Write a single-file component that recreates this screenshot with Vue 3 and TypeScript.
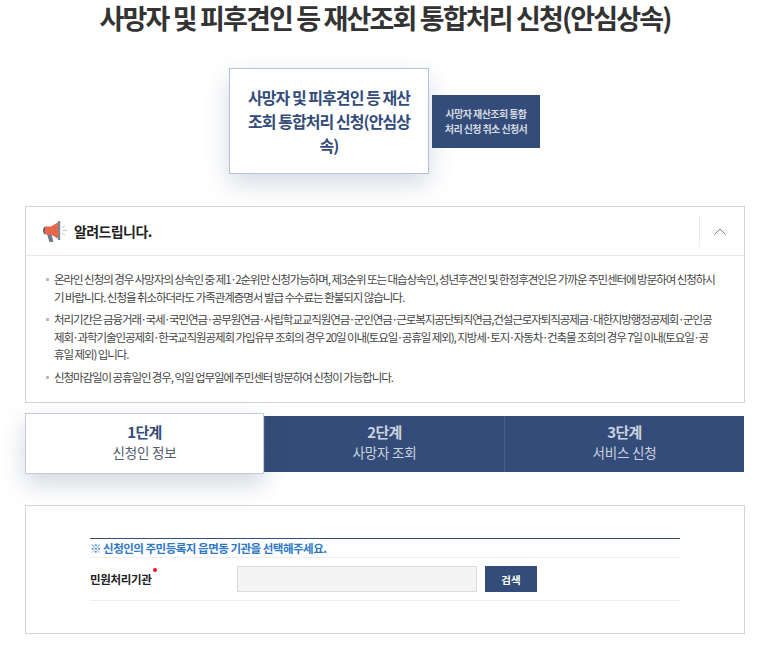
<script setup lang="ts">
const D = '\u200a·\u200a'
const notices: string[] = [
  `온라인 신청의 경우 사망자의 상속인 중 제1${D}2순위만 신청가능하며, 제3순위 또는 대습상속인, 성년후견인 및 한정후견인은 가까운 주민센터에 방문하여 신청하시기 바랍니다. 신청을 취소하더라도 가족관계증명서 발급 수수료는 환불되지 않습니다.`,
  `처리기간은 금융거래${D}국세${D}국민연금${D}공무원연금${D}사립학교교직원연금${D}군인연금${D}근로복지공단퇴직연금,건설근로자퇴직공제금${D}대한지방행정공제회${D}군인공제회${D}과학기술인공제회${D}한국교직원공제회 가입유무 조회의 경우 20일 이내(토요일${D}공휴일 제외), 지방세${D}토지${D}자동차${D}건축물 조회의 경우 7일 이내(토요일${D}공휴일 제외) 입니다.`,
  '신청마감일이 공휴일인 경우, 익일 업무일에 주민센터 방문하여 신청이 가능합니다.',
]
const steps = [
  { no: '1단계', name: '신청인 정보', active: true },
  { no: '2단계', name: '사망자 조회', active: false },
  { no: '3단계', name: '서비스 신청', active: false },
]
</script>

<template>
  <div class="page">
    <h1 class="title">사망자 및 피후견인 등 재산조회 통합처리 신청(안심상속)</h1>

    <div class="choices">
      <div class="choice-main">사망자 및 피후견인 등 재산조회 통합처리 신청(안심상속)</div>
      <div class="choice-sub">사망자 재산조회 통합<br />처리 신청 취소 신청서</div>
    </div>

    <section class="notice">
      <header class="notice-head">
        <svg class="horn" width="26" height="24" viewBox="0 0 26 24">
          <path d="M3 7.500v8C1.800 15 1 13.500 1 11.500S1.800 8 3 7.500z" fill="#5d6b78" />
          <path d="M5 15h4.500l1.600 6.800c.2.800-.3 1.200-1 1.200H8.300c-.6 0-1-.3-1.200-.9z" fill="#6d7b88" />
          <path d="M3 7.500h6L16.500 3v17L9 15.500H3z" fill="#e8664a" />
          <path d="M16 2h2.200v19H16z" fill="#7a8894" />
          <path d="M20 8.700l3-1.700M20.500 11.500H25M20 14.300l3 1.700" stroke="#c3c9cf" stroke-width="1" fill="none" />
        </svg>
        <strong class="notice-title">알려드립니다.</strong>
        <button class="toggle" type="button" aria-label="접기">
          <svg width="12" height="7" viewBox="0 0 12 7"><path d="M.5 6.500 6 1l5.500 5.500" fill="none" stroke="#6f7780" stroke-width="1" /></svg>
        </button>
      </header>
      <ul class="notice-list">
        <li v-for="n in notices" :key="n">{{ n }}</li>
      </ul>
    </section>

    <div class="steps">
      <div v-for="s in steps" :key="s.no" class="step" :class="{ active: s.active }">
        <strong>{{ s.no }}</strong>
        <span>{{ s.name }}</span>
      </div>
    </div>

    <section class="panel">
      <div class="form">
        <p class="caption">※ 신청인의 주민등록지 읍면동 기관을 선택해주세요.</p>
        <div class="row">
          <label class="label">민원처리기관<i class="req"></i></label>
          <input class="field" type="text" readonly />
          <button class="search" type="button">검색</button>
        </div>
      </div>
    </section>
  </div>
</template>

<style>
html, body { margin: 0; background: #fff; }
</style>

<style scoped>
.page {
  box-sizing: border-box;
  width: 766px;
  height: 647px;
  overflow: hidden;
  padding: 0 21px 0 25px;
  font-family: "Noto Sans CJK KR", "Noto Sans", sans-serif;
  color: #333;
}
.title {
  margin: 0;
  height: 68px;
  font-size: 27px;
  line-height: 36px;
  font-weight: 700;
  letter-spacing: -1.85px;
  text-align: center;
  color: #333;
}
.choices {
  display: flex;
  align-items: center;
  margin-left: 204px;
  gap: 3px;
}
.choice-main {
  box-sizing: border-box;
  width: 200px;
  height: 106px;
  padding: 0 15px;
  display: flex;
  align-items: center;
  justify-content: center;
  text-align: center;
  background: #fff;
  border: 1px solid #b5c0dc;
  box-shadow: 0 10px 24px rgba(50, 70, 110, .2);
  font-size: 16px;
  line-height: 24px;
  font-weight: 700;
  letter-spacing: -.95px;
  color: #334c79;
}
.choice-sub {
  box-sizing: border-box;
  width: 108px;
  height: 53px;
  display: flex;
  align-items: center;
  justify-content: center;
  text-align: center;
  background: #334c79;
  color: #d5dae3;
  font-size: 10px;
  line-height: 15px;
  font-weight: 700;
  letter-spacing: -.6px;
}
.notice {
  margin-top: 32px;
  height: 197px;
  box-sizing: border-box;
  border: 1px solid #d4d4d4;
}
.notice-head {
  height: 49px;
  box-sizing: border-box;
  border-bottom: 1px solid #e8e8e8;
  display: flex;
  align-items: center;
  padding-left: 16px;
}
.horn { flex: none; }
.notice-title {
  margin-left: 6px;
  font-size: 14px;
  font-weight: 700;
  letter-spacing: -.6px;
  color: #222;
}
.toggle {
  margin-left: auto;
  width: 45px;
  height: 32px;
  padding: 0 5px 0 0;
  display: flex;
  align-items: center;
  justify-content: center;
  background: none;
  border: 0;
  border-left: 1px solid #ececec;
}
.notice-list {
  list-style: none;
  margin: 0;
  padding: 15px 27px 0 28px;
}
.notice-list li {
  position: relative;
  margin-bottom: 5px;
  font-size: 11.500px;
  line-height: 17.500px;
  letter-spacing: -1.09px;
  color: #444;
  word-break: break-all;
}
.notice-list li:first-child { letter-spacing: -1.05px; }
.notice-list li::before {
  content: "";
  position: absolute;
  left: -8px;
  top: 7px;
  width: 3px;
  height: 3px;
  background: #bbb;
}
.steps {
  display: flex;
  align-items: center;
  height: 61px;
  margin-top: 10px;
}
.step {
  box-sizing: border-box;
  flex: 0 0 240px;
  height: 56px;
  padding-bottom: 4px;
  display: flex;
  flex-direction: column;
  align-items: center;
  justify-content: center;
  background: #334c79;
  color: #ccd2de;
  border-left: 1px solid #465d88;
}
.step:first-child { border-left: 0; }
.step strong {
  font-size: 15px;
  line-height: 21px;
  font-weight: 700;
  letter-spacing: -.6px;
}
.step span {
  font-size: 13.500px;
  line-height: 20px;
  letter-spacing: -.2px;
}
.step.active {
  flex-basis: 239px;
  height: 61px;
  position: relative;
  background: #fff;
  color: #334c79;
  border: 1px solid #c5cbdb;
  box-shadow: 0 10px 24px rgba(50, 70, 110, .22);
}
.step.active span { color: #555e70; }
.panel {
  box-sizing: border-box;
  margin-top: 31px;
  height: 129px;
  border: 1px solid #d4d4d4;
  padding: 32px 64px 0;
}
.form { border-top: 1px solid #334c79; }
.caption {
  margin: 0;
  height: 18px;
  box-sizing: content-box;
  border-bottom: 1px solid #eee;
  font-size: 11.500px;
  line-height: 18px;
  font-weight: 700;
  letter-spacing: -.5px;
  color: #2e78c4;
}
.row {
  display: flex;
  align-items: center;
  height: 42px;
  border-bottom: 1px solid #eee;
}
.label {
  position: relative;
  width: 147px;
  font-size: 11.500px;
  font-weight: 700;
  letter-spacing: -.35px;
  color: #222;
}
.req {
  position: absolute;
  left: 63px;
  top: -3px;
  width: 4px;
  height: 4px;
  border-radius: 50%;
  background: #f01020;
}
.field {
  box-sizing: border-box;
  width: 240px;
  height: 26px;
  background: #f4f4f4;
  border: 1px solid #dcdcdc;
  padding: 0;
  outline: none;
}
.search {
  margin-left: 8px;
  width: 52px;
  height: 26px;
  padding: 0;
  border: 0;
  background: #334c79;
  color: #fff;
  font-family: inherit;
  font-size: 10.500px;
  font-weight: 700;
}
</style>
